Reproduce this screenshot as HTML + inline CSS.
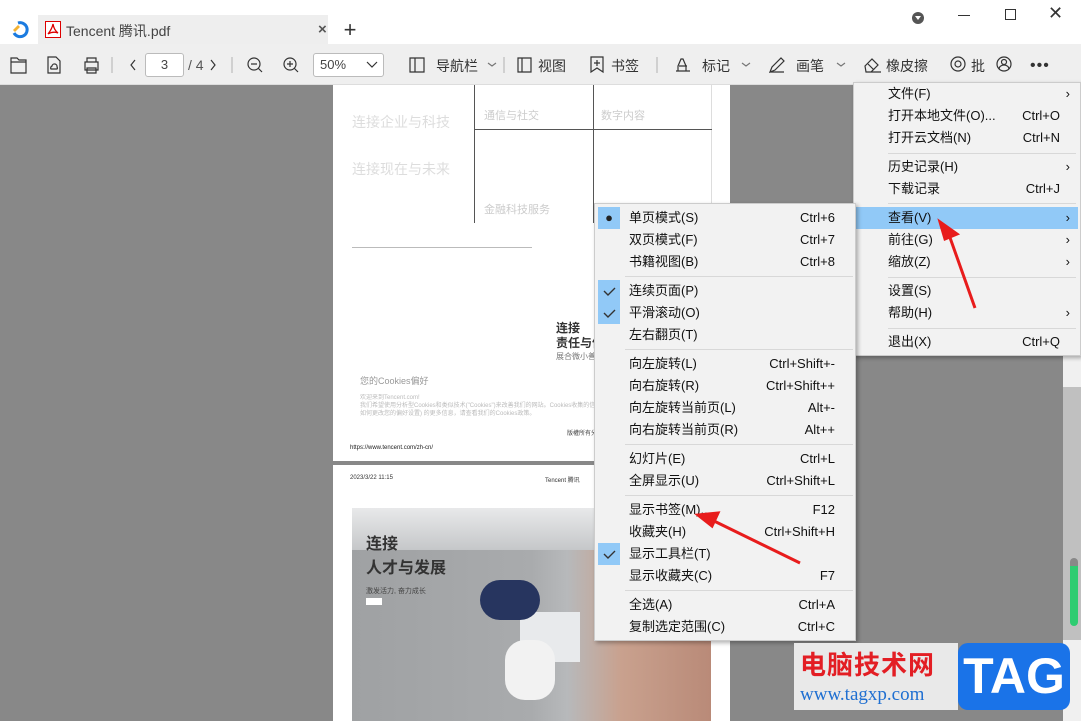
<!DOCTYPE html>
<html><head><meta charset="utf-8">
<style>
*{margin:0;padding:0;box-sizing:border-box}
body{width:1081px;height:721px;overflow:hidden;position:relative;background:#888;font-family:"Liberation Sans","Noto Sans CJK SC",sans-serif;color:#222}
.a{position:absolute}
.tb{font-size:14px;color:#333;white-space:nowrap}
.mi{position:absolute;left:0;right:0;height:22px;font-size:13px;line-height:22px;color:#111;white-space:nowrap}
.mi .t{position:absolute}
.mi .k{position:absolute;right:20px}
.sep{position:absolute;height:1px;background:#d8d8d8}
.chk{position:absolute;left:3px;width:22px;height:22px;background:#91c9f7;text-align:center;font-size:13px;line-height:22px}
.g{color:#ccc;font-size:11px}
</style></head><body>
<div class="a" style="left:0;top:0;width:1081px;height:44px;background:#fff"></div>
<svg class="a" style="left:10px;top:19px" width="22" height="20" viewBox="0 0 22 20"><path d="M8 4 A7 7 0 1 1 4 14" fill="none" stroke="#1b7be0" stroke-width="3"/><path d="M3 11 l5-5 2 2-5 5z" fill="#f2b234"/></svg>
<div class="a" style="left:38px;top:15px;width:290px;height:30px;background:#eeeeee"></div>
<svg class="a" style="left:45px;top:21px" width="16" height="17" viewBox="0 0 16 17"><rect x="0.5" y="0.5" width="15" height="16" fill="#fff" stroke="#d00"/><path d="M3 13 Q7 8 8 3 Q9 9 13 12 Q8 10 3 13z" fill="none" stroke="#d00" stroke-width="1.3"/></svg>
<div class="a tb" style="left:66px;top:21px;font-size:14px;color:#444">Tencent 腾讯.pdf</div>
<div class="a" style="left:318px;top:21px;font-size:15px;color:#555;font-weight:bold">×</div>
<div class="a" style="left:340px;top:16px;width:20px;height:28px;text-align:center;font-size:22px;color:#333;line-height:28px">+</div>
<div class="a" style="left:912px;top:12px;width:12px;height:12px;border-radius:6px;background:#555"></div>
<div class="a" style="left:915px;top:16px;width:0;height:0;border-left:3px solid transparent;border-right:3px solid transparent;border-top:4px solid #fff"></div>
<div class="a" style="left:958px;top:15px;width:12px;height:1px;background:#333"></div>
<div class="a" style="left:1005px;top:9px;width:11px;height:11px;border:1px solid #333"></div>
<div class="a" style="left:1048px;top:3px;font-size:18px;color:#333">✕</div>
<div class="a" style="left:0;top:44px;width:1081px;height:41px;background:#efefef;border-bottom:1px solid #ddd"></div>
<svg class="a" style="left:0;top:52px" width="1081" height="28" viewBox="0 52 1081 28" fill="none" stroke="#333" stroke-width="1.2">
<path d="M11 58h6l2 2h7v13h-15z M11 62h15"/>
<path d="M48 57h8l4 4v12h-12z M51 69a2 2 0 0 1 1-3a2.5 2.5 0 0 1 5 1a1.5 1.5 0 0 1 0 2z"/>
<path d="M85 62h13v8h-13z M87 62v-4h9v4 M87 68h9v5h-9z"/>
<path d="M135 60l-4 5 4 5 M211 60l4 5-4 5"/>
<circle cx="254" cy="64" r="6"/><path d="M251 64h6 M258 68l4 4"/>
<circle cx="290" cy="64" r="6"/><path d="M287 64h6 M290 61v6 M294 68l4 4"/>
<path d="M410 58h14v14h-14z M415 58v14"/>
<path d="M518 58h13v14h-13z M522 58v14"/>
<path d="M591 57h12v15l-6-4-6 4z M597 60v6 M594 63h6"/>
<path d="M676 71h14 M678 71v-5l3-7h2l3 7v5 M679 66h8"/>
<path d="M770 72l2-5 9-9 3 3-9 9z M770 72h14"/>
<path d="M865 66l7-7 6 6-7 7h-5z M868 64l6 6 M871 72h10"/>
<circle cx="958" cy="64" r="3"/><circle cx="958" cy="64" r="7"/>
<circle cx="1004" cy="64" r="7"/><circle cx="1004" cy="62" r="2.5"/><path d="M999 69a5 4 0 0 1 10 0"/>
<path d="M372 73V57 M504 73V57 M657 73V57 M112 73V57 M232 73V57" stroke="#bbb"/>
<path d="M488 63l4 3 4-3 M742 63l4 3 4-3 M837 63l4 3 4-3" stroke="#777"/>
</svg>
<div class="a" style="left:145px;top:53px;width:39px;height:24px;background:#fff;border:1px solid #bbb;border-radius:3px;text-align:center;font-size:13px;line-height:22px;color:#444">3</div>
<div class="a tb" style="left:188px;top:57px;color:#555">/ 4</div>
<div class="a" style="left:313px;top:53px;width:71px;height:24px;background:#fff;border:1px solid #bbb;border-radius:3px;font-size:13px;line-height:22px;color:#444;padding-left:6px">50%</div>
<svg class="a" style="left:366px;top:61px" width="12" height="8"><path d="M1 1l5 5 5-5" fill="none" stroke="#333" stroke-width="1.2"/></svg>
<div class="a tb" style="left:436px;top:56px">导航栏</div>
<div class="a tb" style="left:538px;top:56px">视图</div>
<div class="a tb" style="left:611px;top:56px">书签</div>
<div class="a tb" style="left:702px;top:56px">标记</div>
<div class="a tb" style="left:796px;top:56px">画笔</div>
<div class="a tb" style="left:886px;top:56px">橡皮擦</div>
<div class="a tb" style="left:971px;top:56px">批</div>
<div class="a tb" style="left:1030px;top:57px;font-size:16px;letter-spacing:1px">•••</div>
<div class="a" style="left:333px;top:85px;width:397px;height:376px;background:#fff"></div>
<div class="a" style="left:333px;top:465px;width:397px;height:256px;background:#fff"></div>
<div class="a" style="left:474px;top:85px;width:238px;height:138px;border-left:1px solid #555;border-right:1px solid #ddd"></div>
<div class="a" style="left:474px;top:129px;width:238px;height:1px;background:#555"></div>
<div class="a" style="left:593px;top:85px;width:1px;height:138px;background:#555"></div>
<div class="a g" style="left:484px;top:107px">通信与社交</div>
<div class="a g" style="left:601px;top:107px">数字内容</div>
<div class="a g" style="left:484px;top:201px">金融科技服务</div>
<div class="a" style="left:352px;top:112px;font-size:14px;color:#ddd">连接企业与科技</div>
<div class="a" style="left:352px;top:159px;font-size:14px;color:#ddd">连接现在与未来</div>
<div class="a" style="left:352px;top:247px;width:180px;height:1px;background:#bbb"></div>
<div class="a" style="left:556px;top:321px;width:40px;overflow:hidden;white-space:nowrap;font-size:12px;font-weight:bold;color:#333;line-height:15px">连接<br>责任与信</div>
<div class="a" style="left:556px;top:351px;width:40px;overflow:hidden;white-space:nowrap;font-size:8px;color:#777">展合微小善行,</div>
<div class="a" style="left:360px;top:374px;font-size:9px;color:#999">您的Cookies偏好</div>
<div class="a" style="left:360px;top:394px;width:234px;overflow:hidden;white-space:nowrap;font-size:6px;color:#bbb;line-height:8px">欢迎来到Tencent.com!<br>我们希望使用分析型Cookies和类似技术("Cookies")来改善我们的网站。Cookies收集的信息不会识别您个人。有<br>如何更改您的偏好设置) 的更多信息，请查看我们的Cookies政策。</div>
<div class="a" style="left:567px;top:428px;font-size:6px;color:#444">版權所有分</div>
<div class="a" style="left:350px;top:445px;font-size:6px;color:#222">https://www.tencent.com/zh-cn/</div>
<div class="a" style="left:350px;top:475px;font-size:6px;color:#333">2023/3/22 11:15</div>
<div class="a" style="left:545px;top:475px;font-size:6px;color:#333">Tencent 腾讯</div>
<div class="a" style="left:352px;top:508px;width:359px;height:213px;background:linear-gradient(90deg,#9fa1a3 0%,#a9abad 50%,#b7b9bb 60%,#c9a18e 75%,#b98a78 100%)"></div>
<div class="a" style="left:352px;top:508px;width:359px;height:42px;background:linear-gradient(180deg,#e8e9ea,#c5c7c9)"></div>
<div class="a" style="left:520px;top:612px;width:60px;height:50px;background:#e8eaec"></div>
<div class="a" style="left:480px;top:580px;width:60px;height:40px;background:#27355f;border-radius:20px"></div>
<div class="a" style="left:505px;top:640px;width:50px;height:60px;background:#f2f2f2;border-radius:20px"></div>
<div class="a" style="left:366px;top:533px;font-size:16px;font-weight:bold;color:#333;line-height:24px">连接<br>人才与发展</div>
<div class="a" style="left:366px;top:586px;font-size:7px;color:#444">激发活力, 奋力成长</div>
<div class="a" style="left:366px;top:598px;width:16px;height:7px;background:#fff"></div>
<div class="a" style="left:1063px;top:85px;width:18px;height:636px;background:#f0f0f0"></div>
<div class="a" style="left:1063px;top:387px;width:18px;height:253px;background:#c0c0c0"></div>
<div class="a" style="left:1070px;top:558px;width:8px;height:68px;border-radius:4px;background:linear-gradient(#888 0 12%,#2ecc71 12%)"></div>
<div class="a" style="left:853px;top:82px;width:228px;height:274px;background:#f2f2f2;border:1px solid #ccc;box-shadow:2px 2px 4px rgba(0,0,0,.3)">
<div class="sep" style="left:34px;right:4px;top:70px"></div>
<div class="sep" style="left:34px;right:4px;top:120px"></div>
<div class="sep" style="left:34px;right:4px;top:194px"></div>
<div class="sep" style="left:34px;right:4px;top:245px"></div>
<div class="mi" style="top:124px;left:2px;right:2px;background:#91c9f7"></div>
<div class="mi" style="top:0"><span class="t" style="left:34px">文件(F)</span><span class="k" style="right:10px">›</span></div>
<div class="mi" style="top:22px"><span class="t" style="left:34px">打开本地文件(O)...</span><span class="k">Ctrl+O</span></div>
<div class="mi" style="top:44px"><span class="t" style="left:34px">打开云文档(N)</span><span class="k">Ctrl+N</span></div>
<div class="mi" style="top:73px"><span class="t" style="left:34px">历史记录(H)</span><span class="k" style="right:10px">›</span></div>
<div class="mi" style="top:95px"><span class="t" style="left:34px">下载记录</span><span class="k">Ctrl+J</span></div>
<div class="mi" style="top:124px"><span class="t" style="left:34px">查看(V)</span><span class="k" style="right:10px">›</span></div>
<div class="mi" style="top:146px"><span class="t" style="left:34px">前往(G)</span><span class="k" style="right:10px">›</span></div>
<div class="mi" style="top:168px"><span class="t" style="left:34px">缩放(Z)</span><span class="k" style="right:10px">›</span></div>
<div class="mi" style="top:197px"><span class="t" style="left:34px">设置(S)</span></div>
<div class="mi" style="top:219px"><span class="t" style="left:34px">帮助(H)</span><span class="k" style="right:10px">›</span></div>
<div class="mi" style="top:248px"><span class="t" style="left:34px">退出(X)</span><span class="k">Ctrl+Q</span></div>
</div>
<div class="a" style="left:594px;top:203px;width:262px;height:438px;background:#f2f2f2;border:1px solid #ccc;box-shadow:2px 2px 4px rgba(0,0,0,.3)">
<div class="chk" style="top:3px">●</div>
<div class="chk" style="top:76px;height:44px"><svg width="22" height="44"><path d="M6 11l4 4 7-7 M6 33l4 4 7-7" fill="none" stroke="#333" stroke-width="1.4"/></svg></div>
<div class="chk" style="top:339px"><svg width="22" height="22"><path d="M6 11l4 4 7-7" fill="none" stroke="#333" stroke-width="1.4"/></svg></div>
<div class="sep" style="left:30px;right:2px;top:72px"></div>
<div class="sep" style="left:30px;right:2px;top:145px"></div>
<div class="sep" style="left:30px;right:2px;top:240px"></div>
<div class="sep" style="left:30px;right:2px;top:291px"></div>
<div class="sep" style="left:30px;right:2px;top:386px"></div>
<div class="mi" style="top:3px"><span class="t" style="left:34px">单页模式(S)</span><span class="k">Ctrl+6</span></div>
<div class="mi" style="top:25px"><span class="t" style="left:34px">双页模式(F)</span><span class="k">Ctrl+7</span></div>
<div class="mi" style="top:47px"><span class="t" style="left:34px">书籍视图(B)</span><span class="k">Ctrl+8</span></div>
<div class="mi" style="top:76px"><span class="t" style="left:34px">连续页面(P)</span></div>
<div class="mi" style="top:98px"><span class="t" style="left:34px">平滑滚动(O)</span></div>
<div class="mi" style="top:120px"><span class="t" style="left:34px">左右翻页(T)</span></div>
<div class="mi" style="top:149px"><span class="t" style="left:34px">向左旋转(L)</span><span class="k">Ctrl+Shift+-</span></div>
<div class="mi" style="top:171px"><span class="t" style="left:34px">向右旋转(R)</span><span class="k">Ctrl+Shift++</span></div>
<div class="mi" style="top:193px"><span class="t" style="left:34px">向左旋转当前页(L)</span><span class="k">Alt+-</span></div>
<div class="mi" style="top:215px"><span class="t" style="left:34px">向右旋转当前页(R)</span><span class="k">Alt++</span></div>
<div class="mi" style="top:244px"><span class="t" style="left:34px">幻灯片(E)</span><span class="k">Ctrl+L</span></div>
<div class="mi" style="top:266px"><span class="t" style="left:34px">全屏显示(U)</span><span class="k">Ctrl+Shift+L</span></div>
<div class="mi" style="top:295px"><span class="t" style="left:34px">显示书签(M)...</span><span class="k">F12</span></div>
<div class="mi" style="top:317px"><span class="t" style="left:34px">收藏夹(H)</span><span class="k">Ctrl+Shift+H</span></div>
<div class="mi" style="top:339px"><span class="t" style="left:34px">显示工具栏(T)</span></div>
<div class="mi" style="top:361px"><span class="t" style="left:34px">显示收藏夹(C)</span><span class="k">F7</span></div>
<div class="mi" style="top:390px"><span class="t" style="left:34px">全选(A)</span><span class="k">Ctrl+A</span></div>
<div class="mi" style="top:412px"><span class="t" style="left:34px">复制选定范围(C)</span><span class="k">Ctrl+C</span></div>
</div>
<svg class="a" style="left:0;top:0" width="1081" height="721"><g stroke="#e81c1c" stroke-width="3" fill="#e81c1c">
<path d="M975 308L948 232" /><path d="M940 222l17 12-12 5z"/>
<path d="M800 563L712 520"/><path d="M698 515l20-2-6 13z"/></g></svg>
<div class="a" style="left:794px;top:643px;width:164px;height:67px;background:#e9e9e9"></div>
<div class="a" style="left:800px;top:645px;font-size:26px;font-weight:bold;color:#e31e24;letter-spacing:1px">电脑技术网</div>
<div class="a" style="left:800px;top:684px;font-family:'Liberation Serif',serif;font-size:19px;color:#1f6fd1">www.tagxp.com</div>
<div class="a" style="left:958px;top:643px;width:112px;height:67px;background:#1a73e8;border-radius:10px;color:#fff;font-size:50px;font-weight:bold;text-align:center;line-height:67px">TAG</div>
</body></html>
